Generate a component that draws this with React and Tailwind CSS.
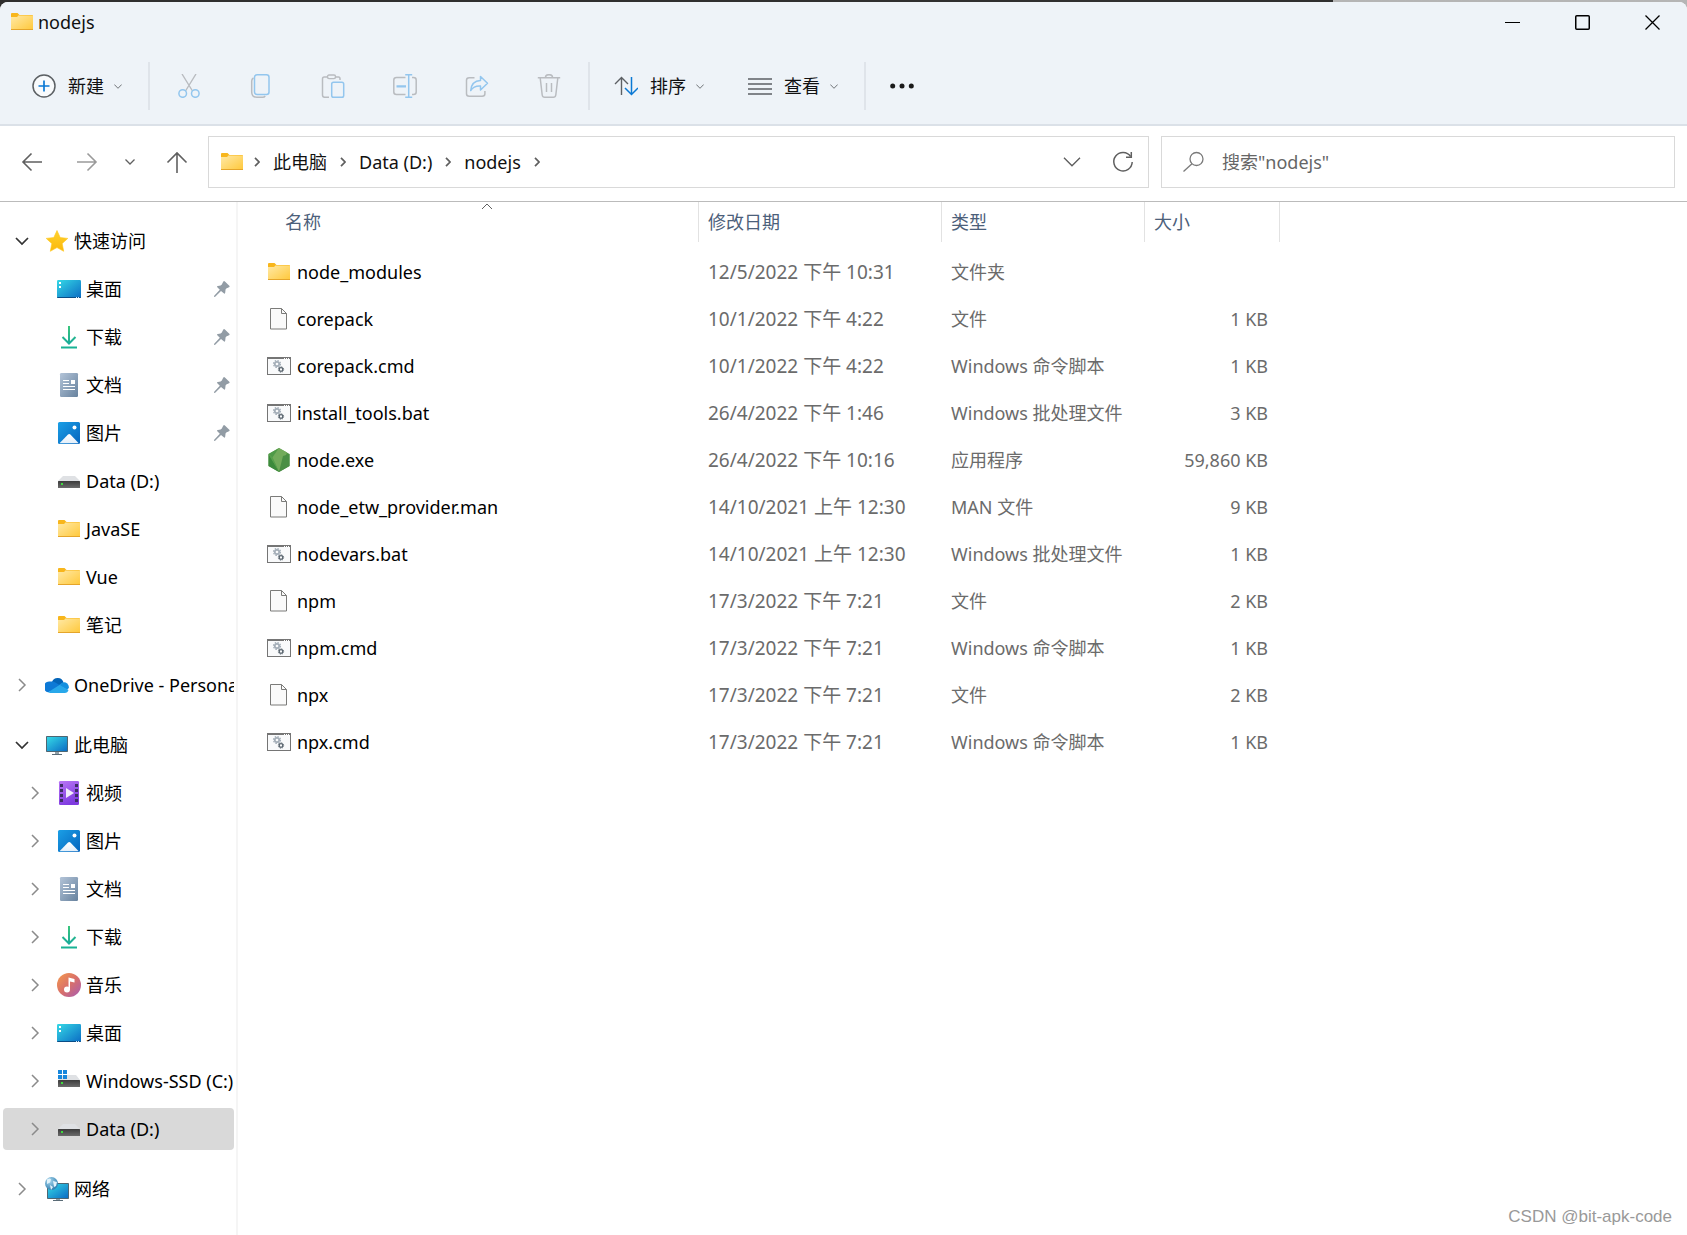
import React from "react";

function Defs() {
  return (
    <svg className="absolute size-0" aria-hidden="true">
      <defs>
        <linearGradient id="g-folder" x1="0" y1="0" x2="1" y2="1">
          <stop offset="0" stopColor="#ffe9a6" />
          <stop offset="1" stopColor="#ffc83a" />
        </linearGradient>
        <linearGradient id="g-desk" x1="0" y1="0" x2="1" y2="1">
          <stop offset="0" stopColor="#35d9e6" />
          <stop offset="1" stopColor="#0b6cc4" />
        </linearGradient>
        <linearGradient id="g-pic" x1="0" y1="0" x2="1" y2="1">
          <stop offset="0" stopColor="#1b9fe6" />
          <stop offset="1" stopColor="#0464bd" />
        </linearGradient>
        <linearGradient id="g-hill" x1="0" y1="0" x2="0" y2="1">
          <stop offset="0" stopColor="#ffffff" />
          <stop offset="1" stopColor="#e3effa" />
        </linearGradient>
        <linearGradient id="g-doc" x1="0" y1="0" x2="1" y2="1">
          <stop offset="0" stopColor="#b3c4d8" />
          <stop offset="1" stopColor="#67829e" />
        </linearGradient>
        <linearGradient id="g-video" x1="0" y1="0" x2="0.4" y2="1">
          <stop offset="0" stopColor="#b977f5" />
          <stop offset="1" stopColor="#7f3be0" />
        </linearGradient>
        <linearGradient id="g-music" x1="0" y1="0" x2="1" y2="1">
          <stop offset="0" stopColor="#f59a4c" />
          <stop offset="0.5" stopColor="#d9706a" />
          <stop offset="1" stopColor="#a65bb5" />
        </linearGradient>
        <linearGradient id="g-down" gradientUnits="userSpaceOnUse" x1="12" y1="0" x2="12" y2="24">
          <stop offset="0" stopColor="#3cc87a" />
          <stop offset="1" stopColor="#0fa3a3" />
        </linearGradient>
        <linearGradient id="g-drive" x1="0" y1="0" x2="0" y2="1">
          <stop offset="0" stopColor="#3b3b3b" />
          <stop offset="1" stopColor="#6b6b6b" />
        </linearGradient>
        <linearGradient id="g-star" x1="0" y1="0" x2="0" y2="1">
          <stop offset="0" stopColor="#ffd22e" />
          <stop offset="1" stopColor="#fbb80c" />
        </linearGradient>
        <radialGradient id="g-globe" cx="0.35" cy="0.3" r="0.8">
          <stop offset="0" stopColor="#a9d8ef" />
          <stop offset="1" stopColor="#2474a8" />
        </radialGradient>
        <linearGradient id="g-node" x1="0" y1="0" x2="1" y2="1">
          <stop offset="0" stopColor="#6fb05c" />
          <stop offset="1" stopColor="#3a7f35" />
        </linearGradient>
      </defs>
    </svg>
  );
}

const Svg = ({ children, className = "size-6" }) => (
  <svg viewBox="0 0 24 24" fill="none" aria-hidden="true" className={className + " shrink-0"}>
    {children}
  </svg>
);

/* ---------- file and place icons ---------- */

const Folder = () => (
  <Svg>
    <path d="M1 4a1 1 0 0 1 1-1h5.500l2 2H22a1 1 0 0 1 1 1v3H1z" fill="#f8b61c" />
    <rect x="1" y="5.500" width="22" height="14.500" rx="0.600" fill="url(#g-folder)" />
    <path d="M1 5a1 1 0 0 1 1-1h6v2L7 7H1z" fill="#f8b61c" />
    <path d="M1 19.500h22" stroke="#e5a52a" />
  </Svg>
);
const Star = () => (
  <Svg>
    <path
      d="M12 1.500l3.200 7 7.600.9-5.600 5.200 1.500 7.700L12 18.600l-6.700 3.700 1.500-7.700L1.200 9.400l7.600-.9z"
      fill="url(#g-star)"
      stroke="#ffc81c"
      strokeWidth="0.600"
      strokeLinejoin="round"
    />
  </Svg>
);
const Desktop = () => (
  <Svg>
    <rect x="0" y="3" width="24" height="18" rx="1.200" fill="url(#g-desk)" />
    <path d="M0 20h24v0a1 1 0 0 1-1 1H1a1 1 0 0 1-1-1z" fill="#0a4d86" />
    <path d="M2 5h2v2H2zM2 9h2v2H2z" fill="#fff" />
    <path d="M19 20h1v1h-1zM21 20h1v1h-1z" fill="#cfe8ff" />
  </Svg>
);
const Download = () => (
  <Svg>
    <path d="M12 1v17M5.500 12l6.500 6.500L18.500 12" stroke="url(#g-down)" strokeWidth="2" />
    <path d="M4 22.500h16" stroke="#18b294" strokeWidth="2" />
  </Svg>
);
const Doc = () => (
  <Svg>
    <rect x="3" y="0" width="18" height="24" rx="1.200" fill="url(#g-doc)" />
    <path d="M6 7.500h6M6 10.500h6M6 13.500h12M6 16.500h12" stroke="#fff" />
    <rect x="14" y="7" width="4" height="4" fill="#fff" />
  </Svg>
);
const Picture = () => (
  <Svg>
    <rect x="1" y="1" width="22" height="22" rx="1.500" fill="url(#g-pic)" />
    <path d="M2.500 22.300L11 13.500q1.200-1.200 2.400 0l8.300 8.800z" fill="url(#g-hill)" />
    <circle cx="17.500" cy="6.500" r="2" fill="#fff" />
  </Svg>
);
const Drive = () => (
  <Svg>
    <path d="M6 7h12l5 5H1z" fill="#dfe1e4" />
    <rect x="1" y="12" width="22" height="7" rx="0.600" fill="url(#g-drive)" />
    <rect x="4" y="14" width="2" height="2" fill="#3ddc3d" />
  </Svg>
);
const WinDrive = () => (
  <Svg>
    <path d="M6 6h13l4 5H1z" fill="#dfe1e4" />
    <rect x="1" y="11" width="22" height="7" rx="0.600" fill="url(#g-drive)" />
    <rect x="4" y="13" width="2" height="2" fill="#3ddc3d" />
    <path d="M1 1h4v4H1zM6 1h4v4H6zM1 6h4v4H1zM6 6h4v4H6z" fill="#1787dc" />
  </Svg>
);
const Cloud = () => (
  <Svg>
    <path d="M7 9a6 6 0 0 1 11.500.500L12 14z" fill="#0364b8" />
    <path d="M5.500 8.600A6 6 0 0 1 10 9.300l8 5L3 19.300A5.400 5.400 0 0 1 5.500 8.600z" fill="#0d79d6" />
    <path d="M14 12l3.500-2.600a5 5 0 0 1 6.300 5.600l-2 2z" fill="#1490df" />
    <path d="M3 19.200L14.500 12l9 5A4 4 0 0 1 19.500 20H5.500a5 5 0 0 1-2.500-.8z" fill="#28a8ea" />
  </Svg>
);
const Monitor = () => (
  <Svg>
    <rect x="1" y="3" width="22" height="16" rx="0.800" fill="#4d6673" />
    <rect x="2" y="4" width="20" height="14" fill="url(#g-desk)" />
    <path d="M10 19h4v2h-4z" fill="#93a0a8" />
    <path d="M7 21h10v1H7z" fill="#5a6b76" />
  </Svg>
);
const Video = () => (
  <Svg>
    <rect x="2" y="0" width="20" height="24" rx="1.200" fill="url(#g-video)" />
    <path
      d="M3 3h3v3H3zM3 8h3v3H3zM3 13h3v3H3zM3 18h3v3H3zM18 3h3v3h-3zM18 8h3v3h-3zM18 13h3v3h-3zM18 18h3v3h-3z"
      fill="#3f2d66"
    />
    <path d="M9 7l8 5-8 5z" fill="#f3ecfb" />
  </Svg>
);
const Music = () => (
  <Svg>
    <circle cx="12" cy="12" r="12" fill="url(#g-music)" />
    <circle cx="10" cy="16.500" r="3" fill="#fff" />
    <path d="M11.500 16.500V4.500l6 1.500v3.500l-4.500-1v8z" fill="#fff" />
  </Svg>
);
const Network = () => (
  <Svg>
    <rect x="2" y="6" width="22" height="16" rx="0.800" fill="#4d6673" />
    <rect x="3" y="7" width="20" height="14" fill="url(#g-desk)" />
    <path d="M11 22h4v1h-4z" fill="#93a0a8" />
    <path d="M8 23h10v1H8z" fill="#5a6b76" />
    <circle cx="6.500" cy="6.500" r="6.500" fill="url(#g-globe)" />
    <path d="M2 2.500q3-2 4 0l-1 3-3 1.500zM8 4l4 1-1 4-2 1zM5 8l3 2-2 3z" fill="#e2f3fb" />
  </Svg>
);
const File = () => (
  <Svg>
    <path d="M3.500 1.500h11l5 5v15.500h-16z" fill="#fafafa" stroke="#7b7b79" />
    <path d="M14.500 1.500v5h5" stroke="#7b7b79" />
  </Svg>
);
const Script = () => (
  <Svg>
    <rect x="0.500" y="3.500" width="23" height="17" fill="#f9fafb" stroke="#757575" />
    <path d="M0 4h24" stroke="#757575" strokeWidth="2" />
    <path d="M17 4.500h1M19 4.500h1M21 4.500h1" stroke="#fff" />
    <circle cx="10" cy="10" r="2.200" stroke="#a3adb7" strokeWidth="1.700" />
    <circle cx="10" cy="10" r="3.500" stroke="#a3adb7" strokeWidth="1.200" strokeDasharray="1.500 1.249" />
    <circle cx="14" cy="15.500" r="1.800" stroke="#5b6670" strokeWidth="1.300" />
    <circle cx="14" cy="15.500" r="2.700" stroke="#5b6670" strokeDasharray="1.100 1.020" />
  </Svg>
);
const NodeExe = () => (
  <Svg>
    <path d="M12 0l10.500 6v12L12 24 1.500 18V6z" fill="url(#g-node)" />
    <path d="M1.500 6L12 24 1.500 18z" fill="#3c8a3c" />
    <path d="M12 0L1.500 6l4 3.500z" fill="#4f9a48" />
    <path d="M5.500 9.500L12 0l8 4.600L12 24z" fill="#72ab5b" />
    <path d="M12 24L16 8l6.500-2v12z" fill="#4a8f45" />
    <path d="M1.500 6L5.500 9.500 12 24z" fill="#58a04c" />
  </Svg>
);
const Pin = () => (
  <svg viewBox="0 0 16 16" aria-hidden="true" className="size-4 shrink-0">
    <path
      d="M9.300.5q.8-.8 1.600 0l4.400 4.200q.7.900-.3 1.500l-2.700 1.400q-.7.500-.8 1.300l-.3 2.900q-.3 1.500-1.400.5L7 9.900 1.200 15.800 0 15.900l.2-1.200L5.800 8.800 3.300 6.300q-.9-1.100.6-1.400l2.700-.4q.8-.2 1.200-.9z"
      fill="#929ca5"
    />
  </svg>
);

/* ---------- line icons ---------- */

const Caret = ({ className }) => (
  <svg viewBox="0 0 8 5" fill="none" aria-hidden="true" className={"h-[5px] w-2 shrink-0 " + (className || "")}>
    <path d="M.3.500L4 4.300 7.700.500" stroke="#707478" />
  </svg>
);
const TreeChevron = ({ open }) =>
  open ? (
    <svg viewBox="0 0 14 14" fill="none" aria-hidden="true" className="size-3.5 shrink-0">
      <path d="M1 4l6 6 6-6" stroke="#333" strokeWidth="1.700" />
    </svg>
  ) : (
    <svg viewBox="0 0 14 14" fill="none" aria-hidden="true" className="size-3.5 shrink-0">
      <path d="M4 1l6 6-6 6" stroke="#8b8b8b" strokeWidth="1.500" />
    </svg>
  );
const CrumbChevron = () => (
  <svg viewBox="0 0 6 10" fill="none" aria-hidden="true" className="h-2.5 w-1.5 shrink-0">
    <path d="M1 .8L5 5 1 9.200" stroke="#5f5f5f" strokeWidth="1.700" />
  </svg>
);

const gray = "#b9bcc0";
const blue = "#93c6ee";

const Cut = () => (
  <Svg>
    <path d="M5 0l10.500 17M19 0L8.500 17" stroke={gray} strokeWidth="1.400" />
    <circle cx="5.700" cy="19.500" r="3.800" stroke={blue} strokeWidth="1.500" />
    <circle cx="18.300" cy="19.500" r="3.800" stroke={blue} strokeWidth="1.500" />
  </Svg>
);
const Copy = () => (
  <Svg>
    <path d="M4.500 4q-1.800 1-1.800 3v11q0 5.200 5 5.200h6q1.700 0 2.500-1.200" stroke={gray} strokeWidth="1.500" />
    <rect x="5.500" y=".8" width="14.500" height="19.600" rx="2.500" stroke={blue} strokeWidth="1.500" />
  </Svg>
);
const Paste = () => (
  <Svg>
    <path d="M7 3H3.200Q1.500 3 1.500 5v16q0 2.200 2 2.200H8M14.500 3h3q1.500 0 1.500 2v1" stroke={gray} strokeWidth="1.500" />
    <rect x="6.500" y="1" width="8" height="3.600" rx="1.500" stroke={gray} strokeWidth="1.400" />
    <rect x="10.700" y="8.200" width="12" height="15" rx="1.800" stroke={blue} strokeWidth="1.500" />
  </Svg>
);
const Rename = () => (
  <Svg>
    <path d="M12.500 3.500H3.500Q.8 3.500.8 6v12q0 2.500 2.700 2.500h9M19 3.500h1.500q2.700 0 2.700 2.500v12q0 2.500-2.700 2.500H19" stroke={gray} strokeWidth="1.500" />
    <path d="M3.500 12.300h9.500" stroke={blue} strokeWidth="2.200" />
    <path d="M15.700 1v22.500M12.200.8h7M12.200 23.300h7" stroke={blue} strokeWidth="1.500" />
  </Svg>
);
const Share = () => (
  <Svg>
    <path d="M9.500 3.700H4.200Q1.500 3.700 1.500 6.200v13.500q0 2.500 2.700 2.500h13q2.700 0 2.700-2.500V17" stroke={gray} strokeWidth="1.500" />
    <path d="M15.500 2.500l7 6.800-7 6.700v-4q-6.500-.5-9.800 4.500.8-9.500 9.800-10z" stroke={blue} strokeWidth="1.500" strokeLinejoin="round" />
  </Svg>
);
const Trash = () => (
  <Svg>
    <path d="M.8 3.700h22.400M8.500 3.500q0-2.800 3.500-2.800t3.500 2.800M3.200 4l2 17q.3 2.200 2.500 2.200h8.600q2.200 0 2.500-2.200l2-17M9.500 9v9M14.500 9v9" stroke={gray} strokeWidth="1.500" />
  </Svg>
);
const Plus = () => (
  <Svg>
    <circle cx="12" cy="12" r="11" fill="#f8fafc" stroke="#5c6064" strokeWidth="1.500" />
    <path d="M12 6.500v11M6.500 12h11" stroke="#0a78d4" strokeWidth="1.700" />
  </Svg>
);
const Sort = () => (
  <Svg>
    <path d="M7.500 21V3.500M1 10l6.500-6.500L14 10" stroke="#5c6064" strokeWidth="1.400" />
    <path d="M17.500 3v17.500M11 14l6.500 6.500L24 14" stroke="#0a78d4" strokeWidth="1.500" />
  </Svg>
);
const View = () => (
  <Svg>
    <path d="M0 5h24M0 10h24M0 15h24M0 20h24" stroke="#5c6064" strokeWidth="1.500" />
  </Svg>
);

/* ---------- data ---------- */

const crumbs = ["此电脑", "Data (D:)", "nodejs"];

const tree = [
  {
    label: "快速访问", icon: Star, open: true,
    children: [
      { label: "桌面", icon: Desktop, pinned: true },
      { label: "下载", icon: Download, pinned: true },
      { label: "文档", icon: Doc, pinned: true },
      { label: "图片", icon: Picture, pinned: true },
      { label: "Data (D:)", icon: Drive },
      { label: "JavaSE", icon: Folder },
      { label: "Vue", icon: Folder },
      { label: "笔记", icon: Folder },
    ],
  },
  { label: "OneDrive - Personal", icon: Cloud },
  {
    label: "此电脑", icon: Monitor, open: true,
    children: [
      { label: "视频", icon: Video, branch: true },
      { label: "图片", icon: Picture, branch: true },
      { label: "文档", icon: Doc, branch: true },
      { label: "下载", icon: Download, branch: true },
      { label: "音乐", icon: Music, branch: true },
      { label: "桌面", icon: Desktop, branch: true },
      { label: "Windows-SSD (C:)", icon: WinDrive, branch: true },
      { label: "Data (D:)", icon: Drive, branch: true, selected: true },
    ],
  },
  { label: "网络", icon: Network },
];

const files = [
  ["node_modules", Folder, "12/5/2022 下午 10:31", "文件夹", ""],
  ["corepack", File, "10/1/2022 下午 4:22", "文件", "1 KB"],
  ["corepack.cmd", Script, "10/1/2022 下午 4:22", "Windows 命令脚本", "1 KB"],
  ["install_tools.bat", Script, "26/4/2022 下午 1:46", "Windows 批处理文件", "3 KB"],
  ["node.exe", NodeExe, "26/4/2022 下午 10:16", "应用程序", "59,860 KB"],
  ["node_etw_provider.man", File, "14/10/2021 上午 12:30", "MAN 文件", "9 KB"],
  ["nodevars.bat", Script, "14/10/2021 上午 12:30", "Windows 批处理文件", "1 KB"],
  ["npm", File, "17/3/2022 下午 7:21", "文件", "2 KB"],
  ["npm.cmd", Script, "17/3/2022 下午 7:21", "Windows 命令脚本", "1 KB"],
  ["npx", File, "17/3/2022 下午 7:21", "文件", "2 KB"],
  ["npx.cmd", Script, "17/3/2022 下午 7:21", "Windows 命令脚本", "1 KB"],
];

/* ---------- parts ---------- */

function TitleBar() {
  return (
    <header className="flex h-10 items-center justify-between pl-2.5">
      <div className="flex items-center gap-1">
        <Folder />
        <h1 className="text-lg leading-6 text-[#111]">nodejs</h1>
      </div>
      <div className="flex">
        <button aria-label="最小化" className="flex h-10 w-[70px] items-center justify-center">
          <svg viewBox="0 0 15 15" fill="none" className="size-[15px]"><path d="M0 7.500h15" stroke="#000" /></svg>
        </button>
        <button aria-label="最大化" className="flex h-10 w-[70px] items-center justify-center">
          <svg viewBox="0 0 15 15" fill="none" className="size-[15px]"><rect x=".75" y=".75" width="13.500" height="13.500" rx="1" stroke="#000" strokeWidth="1.500" /></svg>
        </button>
        <button aria-label="关闭" className="flex h-10 w-[70px] items-center justify-center">
          <svg viewBox="0 0 15 15" fill="none" className="size-[15px]"><path d="M.5.500l14 14M14.500.500l-14 14" stroke="#000" strokeWidth="1.300" /></svg>
        </button>
      </div>
    </header>
  );
}

const Divider = () => <div className="h-12 w-0.5 shrink-0 bg-[#dfe4ea]" />;

const MenuButton = ({ icon: Icon, label }) => (
  <button className="flex h-12 shrink-0 items-center whitespace-nowrap text-lg text-[#111]">
    <Icon />
    <span className="mr-2.5 ml-3">{label}</span>
    <Caret />
  </button>
);

function Toolbar() {
  const actions = [
    ["剪切", Cut], ["复制", Copy], ["粘贴", Paste], ["重命名", Rename], ["共享", Share], ["删除", Trash],
  ];
  return (
    <div className="flex h-[84px] items-center border-b-2 border-[#dbe1e8] pt-1.5 pl-8">
      <MenuButton icon={Plus} label="新建" />
      <div className="w-[26px] shrink-0" />
      <Divider />
      <div className="flex px-[3px]">
        {actions.map(([name, Icon]) => (
          <button key={name} aria-label={name} disabled className="flex h-12 w-[72px] items-center justify-center">
            <Icon />
          </button>
        ))}
      </div>
      <Divider />
      <div className="flex gap-[44px] pr-[26px] pl-6">
        <MenuButton icon={Sort} label="排序" />
        <MenuButton icon={View} label="查看" />
      </div>
      <Divider />
      <button aria-label="更多" className="flex h-12 w-[72px] items-center justify-center">
        <svg viewBox="0 0 24 6" className="h-1.5 w-6" fill="#1a1a1a">
          <circle cx="2.700" cy="3" r="2.500" />
          <circle cx="12" cy="3" r="2.500" />
          <circle cx="21.300" cy="3" r="2.500" />
        </svg>
      </button>
    </div>
  );
}

function AddressRow() {
  return (
    <div className="grid h-[76px] grid-cols-[196px_941fr_514fr] items-center gap-3 border-b border-[#bbb] pr-3 pb-1">
      <nav aria-label="导航" className="flex items-center pl-5">
        <button aria-label="后退" className="size-6">
          <Svg><path d="M22 12H3M11.500 3.500L3 12l8.500 8.500" stroke="#606060" strokeWidth="1.600" /></Svg>
        </button>
        <button aria-label="前进" className="ml-8 size-6">
          <Svg><path d="M1 12h19M11.500 3.500L20 12l-8.500 8.500" stroke="#9a9a9a" strokeWidth="1.600" /></Svg>
        </button>
        <button aria-label="最近位置" className="ml-[25px] flex h-6 w-2.5 items-center">
          <svg viewBox="0 0 10 6" fill="none" className="h-1.5 w-2.5"><path d="M.5.500L5 5l4.500-4.500" stroke="#606060" strokeWidth="1.300" /></svg>
        </button>
        <button aria-label="上移" className="ml-[30px] size-6">
          <Svg><path d="M12 23V3M2.500 12.500L12 3l9.500 9.500" stroke="#606060" strokeWidth="1.600" /></Svg>
        </button>
      </nav>
      <div className="flex h-[52px] min-w-0 items-center border border-[#d9d9d9] pl-[11px] text-lg text-[#111]">
        <Folder />
        <div className="ml-[10px] flex items-center gap-[13px] whitespace-nowrap">
          <CrumbChevron />
          {crumbs.map((c) => (
            <React.Fragment key={c}>
              <a href="#" className="leading-6">{c}</a>
              <CrumbChevron />
            </React.Fragment>
          ))}
        </div>
        <button aria-label="历史记录" className="mr-[30px] ml-auto">
          <svg viewBox="0 0 18 10" fill="none" className="h-2.5 w-[18px]"><path d="M1 .800l8 8 8-8" stroke="#606060" strokeWidth="1.400" /></svg>
        </button>
        <button aria-label="刷新" className="mr-[13px]">
          <Svg>
            <path d="M19.600 6.500A9.200 9.200 0 1 0 21.200 12" stroke="#606060" strokeWidth="1.500" />
            <path d="M20.300 2v5.300H15" stroke="#606060" strokeWidth="1.500" />
          </Svg>
        </button>
      </div>
      <label className="flex h-[52px] min-w-0 items-center gap-4 border border-[#d9d9d9] pl-5">
        <Svg>
          <circle cx="14.500" cy="9" r="6.500" stroke="#7a7a7a" strokeWidth="1.300" />
          <path d="M10 13.700L1.500 21.500" stroke="#7a7a7a" strokeWidth="1.300" />
        </Svg>
        <input
          type="search"
          aria-label="搜索"
          placeholder={'搜索"nodejs"'}
          className="w-full min-w-0 bg-transparent text-lg leading-6 outline-none placeholder:text-[#666]"
        />
      </label>
    </div>
  );
}

function TreeItem({ item, nested }) {
  const Icon = item.icon;
  return (
    <button
      className={
        "flex h-[42px] w-full items-center overflow-hidden rounded-sm pr-1 text-left text-lg leading-6 whitespace-nowrap text-black " +
        (nested ? "pl-[25px] " : "pl-3 ") +
        (item.selected ? "bg-[#d9d9d9]" : "")
      }
    >
      <span className={nested ? "mr-[15px] size-3.5 shrink-0" : "mr-4 size-3.5 shrink-0"}>
        {(!nested || item.branch) && <TreeChevron open={item.open} />}
      </span>
      <Icon />
      <span className="ml-[5px] grow">{item.label}</span>
      {item.pinned && <Pin />}
    </button>
  );
}

function Sidebar() {
  return (
    <aside className="w-[238px] shrink-0 border-r-2 border-[#f5f5f5] pt-[18px] pr-0.5 pl-[3px]">
      <ul className="flex flex-col gap-[18px]">
        {tree.map((group) => (
          <li key={group.label} className="flex flex-col gap-1.5">
            <TreeItem item={group} />
            {group.children && (
              <ul className="flex flex-col gap-1.5">
                {group.children.map((c) => (
                  <li key={c.label}><TreeItem item={c} nested /></li>
                ))}
              </ul>
            )}
          </li>
        ))}
      </ul>
    </aside>
  );
}

function FileTable() {
  const head = "h-10 border-r border-[#e2e2e2] p-0 text-left font-normal text-[#4c607a]";
  return (
    <main className="min-w-0 grow overflow-hidden">
      <table className="w-[1042px] table-fixed border-separate border-spacing-0 text-lg leading-6 whitespace-nowrap">
        <colgroup>
          <col className="w-[461px]" />
          <col className="w-[243px]" />
          <col className="w-[203px]" />
          <col className="w-[135px]" />
        </colgroup>
        <thead>
          <tr>
            <th scope="col" aria-sort="ascending" className={head + " relative"}>
              <button className="pl-[47px]">名称</button>
              <svg viewBox="0 0 12 7" fill="none" aria-hidden="true" className="absolute top-px right-[205px] h-[7px] w-3">
                <path d="M1 6l5-5 5 5" stroke="#606060" />
              </svg>
            </th>
            <th scope="col" className={head}><button className="pl-[9px]">修改日期</button></th>
            <th scope="col" className={head}><button className="pl-[9px]">类型</button></th>
            <th scope="col" className={head}><button className="pl-[9px]">大小</button></th>
          </tr>
        </thead>
        <tbody className="text-[#6b6b6b] before:block before:h-1.5">
          {files.map(([name, Icon, date, type, size]) => (
            <tr key={name} className="h-[47px]">
              <td className="p-0">
                <div className="flex items-center gap-1.5 pl-[29px] text-black">
                  <Icon />
                  {name}
                </div>
              </td>
              <td className="p-0 pl-[9px] text-[19px]">{date}</td>
              <td className="p-0 pl-[9px]">{type}</td>
              <td className="p-0 pr-3 text-right">{size}</td>
            </tr>
          ))}
        </tbody>
      </table>
    </main>
  );
}

export default function App() {
  return (
    <div className="min-h-screen bg-linear-to-r from-[#2f2f2f] from-79% to-[#b5b5b5] to-79% pt-0.5 font-['Noto_Sans','Noto_Sans_CJK_SC',sans-serif]">
      <Defs />
      <div className="relative flex min-h-[calc(100vh-2px)] flex-col overflow-hidden rounded-t-lg bg-white">
        <div className="bg-[#eef3f8]">
          <TitleBar />
          <Toolbar />
        </div>
        <AddressRow />
        <div className="flex grow">
          <Sidebar />
          <FileTable />
        </div>
        <p className="absolute right-[15px] bottom-1.5 font-['Liberation_Sans',sans-serif] text-[17px] leading-6 text-[#999]">
          CSDN @bit-apk-code
        </p>
      </div>
    </div>
  );
}
